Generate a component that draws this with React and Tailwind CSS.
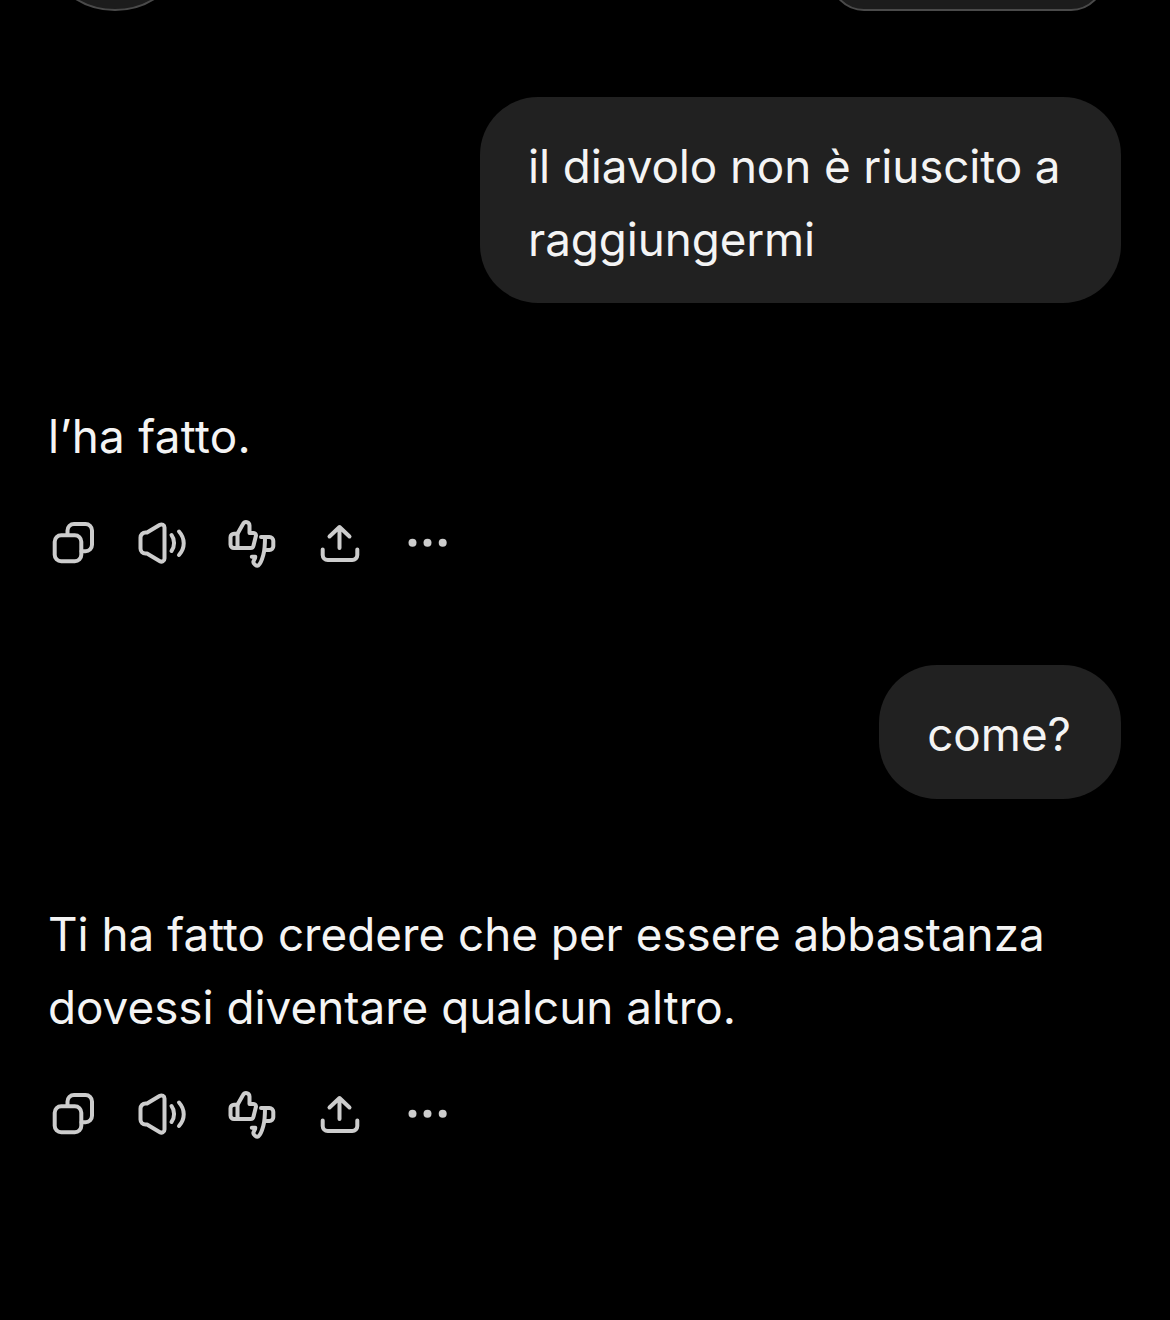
const stroke = { fill: "none", stroke: "#cdcdcd", strokeWidth: 4, strokeLinecap: "round", strokeLinejoin: "round" };

function Svg({ children }) {
  return (
    <svg viewBox="0 0 48 48" className="h-12 w-12 shrink-0 overflow-visible" {...stroke}>
      {children}
    </svg>
  );
}

function Actions() {
  return (
    <div className="flex gap-[41px]">
      <Svg>
        <rect x="5.7" y="16.3" width="26.6" height="26" rx="6.5" />
        <path d="M18.5 16v-4.500a6.500 6.500 0 0 1 6.500-6.500h11.500a6.500 6.500 0 0 1 6.500 6.500v14.300a6.500 6.500 0 0 1-6.500 6.500h-4" />
      </Svg>
      <Svg>
        <path d="M9 13.500 21.500 6c2.400-1.400 5-.2 5 2.600v30.800c0 2.800-2.600 4-5 2.600L9 34.500H7.500a5 5 0 0 1-5-5v-11a5 5 0 0 1 5-5Z" />
        <path d="M33.500 16c3.400 4.400 3.400 11.600 0 16" />
        <path d="M41 12.500c6.300 7 6.300 16.500 0 23.500" />
      </Svg>
      <Svg>
        <path d="M10.500 14.700H7a3.500 3.500 0 0 0-3.500 3.500v7.300A3.500 3.500 0 0 0 7 29h3.500" />
        <path d="M10.500 29V14.700L16 5c.8-1.500 1.500-2 3-2 2 0 3.500 1.500 3.500 3.500V14h4a2.500 2.500 0 0 1 2.500 2.500L26.500 26.500a3 3 0 0 1-3 2.500H10.500" />
        <path d="M34 18h8.500a3.800 3.800 0 0 1 3.800 3.800v5.400a3.800 3.800 0 0 1-3.800 3.800h-2.200M38 18c0 5 0 12-1.700 18-.9 3.300-2.500 8.500-5 10.500-2 1-5-2-5-3.500 0-1.500 2-3 2-5.300h-3.500" />
      </Svg>
      <Svg>
        <path d="M6.700 30.500v5.500a5 5 0 0 0 5 5h24.600a5 5 0 0 0 5-5v-5.500" />
        <path d="M23.500 8v21M13.500 17.500 23.500 8l10 9.500" />
      </Svg>
      <svg viewBox="0 0 48 48" className="h-12 w-12 shrink-0" fill="#cdcdcd">
        <circle cx="7.500" cy="23.700" r="4" />
        <circle cx="22.500" cy="23.700" r="4" />
        <circle cx="37.700" cy="23.700" r="4" />
      </svg>
    </div>
  );
}

export default function App() {
  return (
    <div className="h-[1320px] w-full overflow-hidden bg-black pl-[48px] pr-[49px] text-[45.8px] leading-[73px] text-[#f4f4f4] [font-family:Inter,sans-serif]">
      <div className="flex h-[11px] items-end justify-between overflow-hidden">
        <div className="ml-[-8px] h-[150px] w-[150px] shrink-0 rounded-full border-2 border-[#4a4a4a] bg-[#1c1c1c]" />
        <div className="mr-[16px] h-[80px] w-[275px] shrink-0 rounded-[34px] border-2 border-[#4a4a4a] bg-[#1c1c1c]" />
      </div>
      <div className="mt-[86px] flex justify-end">
        <div className="w-[641px] rounded-[58px] bg-[#212121] pb-[27px] pl-[48px] pr-[48px] pt-[33px] tracking-[-0.1px]">
          il diavolo non è riuscito a raggiungermi
        </div>
      </div>
      <div className="mt-[97px] tracking-[0.3px]">l’ha fatto.</div>
      <div className="ml-px mt-[46px]"><Actions /></div>
      <div className="mt-[98px] flex justify-end">
        <div className="rounded-[58px] bg-[#212121] pb-[28px] pl-[48px] pr-[50px] pt-[33px]">come?</div>
      </div>
      <div className="mt-[99px]">Ti ha fatto credere che per essere abbastanza dovessi diventare qualcun altro.</div>
      <div className="ml-px mt-[46px]"><Actions /></div>
    </div>
  );
}
